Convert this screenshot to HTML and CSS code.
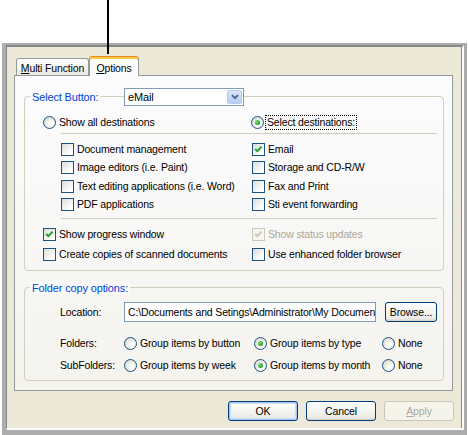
FILE: index.html
```html
<!DOCTYPE html>
<html>
<head>
<meta charset="utf-8">
<link rel="stylesheet" href="styles.css">
</head>
<body>
<div class="callout"></div>
<div class="frame">
  <div class="dialog">
    <div class="tabs">
      <div class="tab"><span><u>M</u>ulti Function</span></div>
      <div class="tab active"><span><u>O</u>ptions</span></div>
    </div>
    <div class="panel">
      <div class="group group-select">
        <div class="group-head">
          <span class="legend">Select Button:</span>
          <div class="combo">
            <span class="combo-text">eMail</span>
            <span class="combo-btn"><svg width="8" height="6" viewBox="0 0 8 6"><path d="M1 1.2 L4 4.2 L7 1.2" fill="none" stroke="#4D6185" stroke-width="1.8"/></svg></span>
          </div>
        </div>
        <div class="radio-row">
          <label class="opt"><span class="radio"></span><span class="txt">Show all destinations</span></label>
          <label class="opt"><span class="radio on"></span><span class="txt focus">Select destinations:</span></label>
        </div>
        <div class="sep"></div>
        <div class="check-grid">
          <label class="opt"><span class="cb"></span><span class="txt">Document management</span></label>
          <label class="opt"><span class="cb"><svg width="11" height="11" viewBox="0 0 11 11"><path d="M2.2 5 L4.3 7.2 L8.6 2.6" fill="none" stroke="#21A121" stroke-width="1.9"/></svg></span><span class="txt">Email</span></label>
          <label class="opt"><span class="cb"></span><span class="txt">Image editors (i.e. Paint)</span></label>
          <label class="opt"><span class="cb"></span><span class="txt">Storage and CD-R/W</span></label>
          <label class="opt"><span class="cb"></span><span class="txt">Text editing applications (i.e. Word)</span></label>
          <label class="opt"><span class="cb"></span><span class="txt">Fax and Print</span></label>
          <label class="opt"><span class="cb"></span><span class="txt">PDF applications</span></label>
          <label class="opt"><span class="cb"></span><span class="txt">Sti event forwarding</span></label>
        </div>
        <div class="sep sep2"></div>
        <div class="bottom-grid">
          <label class="opt"><span class="cb"><svg width="11" height="11" viewBox="0 0 11 11"><path d="M2.2 5 L4.3 7.2 L8.6 2.6" fill="none" stroke="#21A121" stroke-width="1.9"/></svg></span><span class="txt">Show progress window</span></label>
          <label class="opt dis"><span class="cb"><svg width="11" height="11" viewBox="0 0 11 11"><path d="M2.2 5 L4.3 7.2 L8.6 2.6" fill="none" stroke="#C9C7BA" stroke-width="1.9"/></svg></span><span class="txt">Show status updates</span></label>
          <label class="opt"><span class="cb"></span><span class="txt">Create copies of scanned documents</span></label>
          <label class="opt"><span class="cb"></span><span class="txt">Use enhanced folder browser</span></label>
        </div>
      </div>
      <div class="group group-folder">
        <div class="group-head">
          <span class="legend">Folder copy options:</span>
        </div>
        <div class="loc-row">
          <span class="flabel">Location:</span>
          <div class="textbox">C:\Documents and Setings\Administrator\My Documents</div>
          <div class="btn browse">Browse...</div>
        </div>
        <div class="fold-grid">
          <span class="flabel">Folders:</span>
          <label class="opt"><span class="radio"></span><span class="txt">Group items by button</span></label>
          <label class="opt"><span class="radio on"></span><span class="txt">Group items by type</span></label>
          <label class="opt"><span class="radio"></span><span class="txt">None</span></label>
          <span class="flabel">SubFolders:</span>
          <label class="opt"><span class="radio"></span><span class="txt">Group items by week</span></label>
          <label class="opt"><span class="radio on"></span><span class="txt">Group items by month</span></label>
          <label class="opt"><span class="radio"></span><span class="txt">None</span></label>
        </div>
      </div>
    </div>
    <div class="buttons">
      <div class="btn default">OK</div>
      <div class="btn">Cancel</div>
      <div class="btn disabled"><span><u>A</u>pply</span></div>
    </div>
  </div>
</div>
</body>
</html>
```
FILE: styles.css
```css
* { box-sizing: border-box; }
html, body { margin: 0; padding: 0; }
body {
  width: 468px;
  height: 435px;
  overflow: hidden;
  position: relative;
  background: #ffffff;
  font-family: "Liberation Sans", Arial, sans-serif;
  font-size: 10.5px;
  letter-spacing: -0.15px;
  color: #000;
}
.callout {
  position: absolute;
  left: 107px;
  top: 0;
  width: 2px;
  height: 54px;
  background: #000;
  z-index: 10;
}
.frame {
  margin: 43px 0 0 2px;
  width: 465px;
  height: 392px;
  border-style: solid;
  border-color: #ADADAD;
  border-width: 2px 3px 5px 4px;
}
.dialog {
  height: 100%;
  background: #ECE9D8;
  border-style: solid;
  border-width: 2px 2px 2px 1px;
  border-color: #888888 #ffffff #ffffff #888888;
  box-shadow: inset -1px 0 0 #888888;
  padding: 9px 8px 0 7px;
}
.tabs {
  display: flex;
  align-items: flex-end;
  height: 19px;
  margin-left: 2px;
  position: relative;
  z-index: 3;
}
.tab {
  width: 73px;
  height: 17px;
  border: 1px solid #919B9C;
  border-bottom: 0;
  border-radius: 3px 3px 0 0;
  background: linear-gradient(#FFFFFF, #F3F3EF 60%, #E9E8E1);
  display: flex;
  align-items: center;
  justify-content: center;
  padding-top: 1px;
}
.tab.active {
  width: 50px;
  height: 20px;
  margin-bottom: -1px;
  border-top-color: #E68B2C;
  box-shadow: inset 0 2px 0 #FFC83C;
  background: #FCFCFE;
  padding-top: 2px;
}
.panel {
  position: relative;
  z-index: 1;
  width: 439px;
  height: 316px;
  border: 1px solid #919B9C;
  background: linear-gradient(#FCFCFE, #F4F3EE);
  padding-top: 20px;
  padding-left: 9px;
}
.group {
  width: 420px;
  border: 1px solid #D0D0BF;
  border-radius: 4px;
}
.group-select { padding-bottom: 7px; }
.group-folder { margin-top: 16px; padding-bottom: 6px; }
.group-head {
  display: grid;
  grid-template-columns: 94px 120px;
  align-items: center;
  height: 18px;
  margin-top: -9px;
  padding-left: 5px;
}
.group-folder .group-head { grid-template-columns: auto; justify-content: start; }
.legend {
  justify-self: start;
  white-space: nowrap;
  color: #0046D5;
  background: #FAFAFB;
  padding: 0 2px;
  line-height: 14px;
  font-size: 11px;
}
.combo {
  height: 18px;
  border: 1px solid #7F9DB9;
  background: #fff;
  display: flex;
  align-items: center;
  justify-content: space-between;
  padding: 0 1px 0 3px;
  font-size: 11px;
}
.combo-btn {
  width: 15px;
  height: 14px;
  border: 1px solid #B9CBF3;
  border-radius: 2px;
  background: linear-gradient(#D7E3FC, #B8CDF8);
  display: flex;
  align-items: center;
  justify-content: center;
}
.opt {
  display: flex;
  align-items: center;
  white-space: nowrap;
}
.opt .txt { margin-left: 3px; line-height: 13px; }
.opt .focus {
  outline: 1px dotted #000;
  outline-offset: 0;
  padding: 0 1px;
  margin-left: 2px;
}
.radio {
  width: 13px;
  height: 13px;
  flex: none;
  border: 1px solid #1C5180;
  border-radius: 50%;
  background: radial-gradient(circle at 65% 65%, #FFFFFF 10%, #E6E6E0 60%, #D4D4CC);
  position: relative;
}
.radio.on::after {
  content: "";
  position: absolute;
  left: 3px;
  top: 3px;
  width: 5px;
  height: 5px;
  border-radius: 50%;
  background: radial-gradient(circle at 35% 35%, #7BE27B, #21A121 70%);
}
.cb {
  width: 13px;
  height: 13px;
  flex: none;
  border: 1px solid #1C5180;
  background: linear-gradient(135deg, #DCDCD7, #FFFFFF 80%);
  display: flex;
  align-items: center;
  justify-content: center;
}
.dis .cb { border-color: #CAC8BB; background: #F6F6F1; }
.dis .txt { color: #ACA899; }
.radio-row {
  display: grid;
  grid-template-columns: 208px auto;
  height: 18px;
  align-items: center;
  margin-top: 7px;
  padding-left: 18px;
}
.sep {
  margin: 2px 0 0 36px;
  width: 376px;
  height: 1px;
  background: #D0D0BF;
}
.sep2 { margin-top: 4px; }
.check-grid {
  display: grid;
  grid-template-columns: 191px auto;
  grid-auto-rows: 18.5px;
  align-items: center;
  margin-top: 6px;
  padding-left: 36px;
}
.bottom-grid {
  display: grid;
  grid-template-columns: 209px auto;
  grid-auto-rows: 18px;
  row-gap: 2px;
  align-items: center;
  margin-top: 6px;
  padding-left: 18px;
}
.loc-row {
  display: grid;
  grid-template-columns: 64px 252px 61px;
  align-items: center;
  height: 20px;
  margin-top: 5px;
  padding-left: 35px;
}
.textbox {
  height: 20px;
  border: 1px solid #7F9DB9;
  background: #fff;
  padding-left: 3px;
  line-height: 18px;
  white-space: nowrap;
  overflow: hidden;
}
.fold-grid {
  display: grid;
  grid-template-columns: 64px 130px 128px auto;
  grid-auto-rows: 18px;
  row-gap: 4px;
  align-items: center;
  margin-top: 12px;
  padding-left: 35px;
}
.btn {
  width: 70px;
  height: 20px;
  border: 1px solid #003C74;
  border-radius: 3px;
  background: linear-gradient(#FFFFFF, #F4F4F0 50%, #ECEBE6 85%, #D6D0C5);
  display: flex;
  align-items: center;
  justify-content: center;
}
.btn.browse { width: 52px; margin-left: 9px; }
.btn.default { box-shadow: inset 0 0 0 1px #A8C4F4, inset 0 0 0 2px #CEDDF8; }
.btn.disabled {
  border-color: #C9C7BA;
  background: #F5F4EA;
  color: #ACA899;
}
.buttons {
  display: flex;
  justify-content: flex-end;
  gap: 8px;
  margin-top: 10px;
}
```
